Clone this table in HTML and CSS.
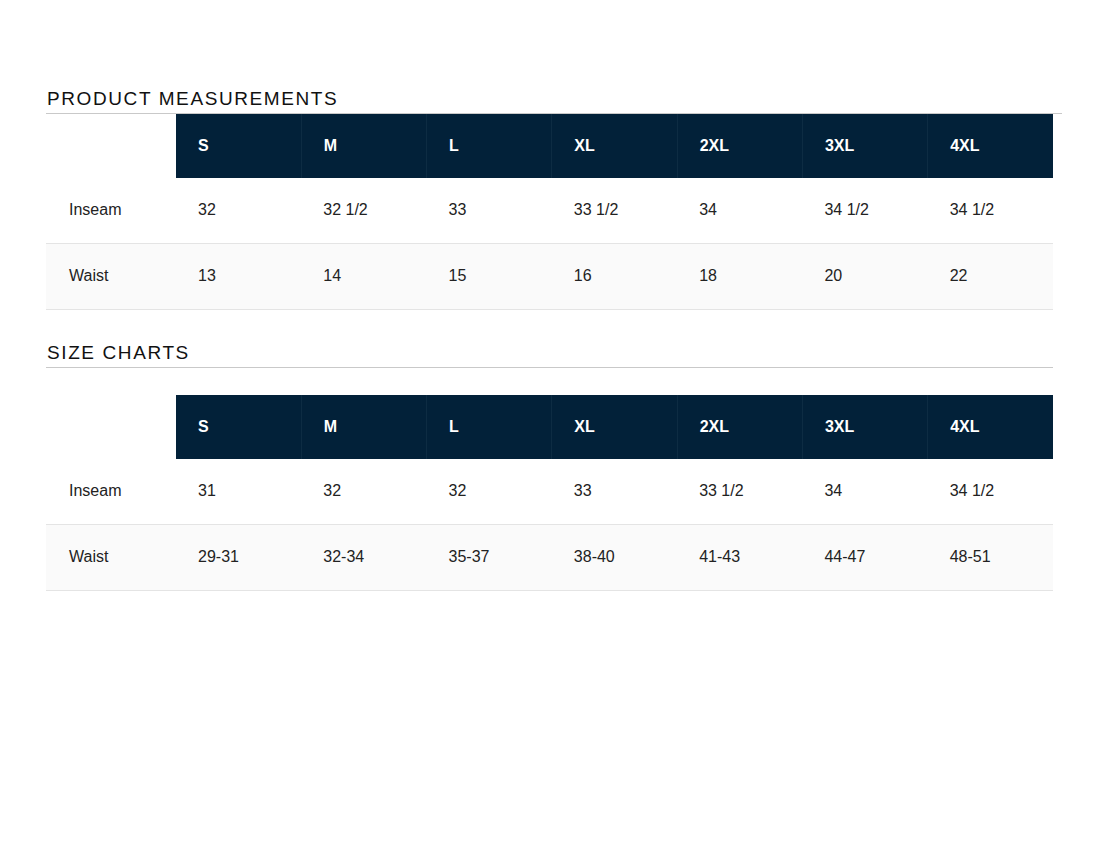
FILE: index.html
```html
<!DOCTYPE html>
<html lang="en">
<head>
    <meta charset="UTF-8">
    <meta name="viewport" content="width=device-width, initial-scale=1.0">
    <title>Size Guide</title>
    <link rel="stylesheet" href="styles.css">
</head>
<body>
    <div class="guide">
        <h2 class="section-title wide">Product Measurements</h2>
        <table class="size-table">
            <thead>
                <tr>
                    <th class="blank"></th>
                    <th>S</th><th>M</th><th>L</th><th>XL</th><th>2XL</th><th>3XL</th><th>4XL</th>
                </tr>
            </thead>
            <tbody>
                <tr>
                    <td>Inseam</td>
                    <td>32</td><td>32 1/2</td><td>33</td><td>33 1/2</td><td>34</td><td>34 1/2</td><td>34 1/2</td>
                </tr>
                <tr class="alt">
                    <td>Waist</td>
                    <td>13</td><td>14</td><td>15</td><td>16</td><td>18</td><td>20</td><td>22</td>
                </tr>
            </tbody>
        </table>

        <h2 class="section-title spaced">Size Charts</h2>
        <table class="size-table">
            <thead>
                <tr>
                    <th class="blank"></th>
                    <th>S</th><th>M</th><th>L</th><th>XL</th><th>2XL</th><th>3XL</th><th>4XL</th>
                </tr>
            </thead>
            <tbody>
                <tr>
                    <td>Inseam</td>
                    <td>31</td><td>32</td><td>32</td><td>33</td><td>33 1/2</td><td>34</td><td>34 1/2</td>
                </tr>
                <tr class="alt">
                    <td>Waist</td>
                    <td>29-31</td><td>32-34</td><td>35-37</td><td>38-40</td><td>41-43</td><td>44-47</td><td>48-51</td>
                </tr>
            </tbody>
        </table>
    </div>
</body>
</html>
```

FILE: styles.css
```css
body {
    margin: 0;
    padding: 0;
    background: #fff;
    font-family: "Liberation Sans", Arial, sans-serif;
    color: #222;
}
.guide {
    width: 1007px;
    padding: 86px 0 0 46px;
}
.section-title {
    margin: 0;
    padding: 2px 0 3px 1px;
    font-size: 19px;
    line-height: 22px;
    font-weight: normal;
    letter-spacing: 1.6px;
    text-transform: uppercase;
    color: #111;
    border-bottom: 1px solid #c9c9c9;
}
.section-title.wide {
    margin-right: -9px;
}
.section-title.spaced {
    margin-top: 30px;
    margin-bottom: 27px;
}
.size-table {
    width: 1007px;
    border-collapse: collapse;
    table-layout: fixed;
}
.size-table th,
.size-table td {
    text-align: left;
    font-size: 16px;
    line-height: 20px;
    padding: 22px 0 22px 22px;
}
.size-table th {
    background-color: #022139;
    color: #fff;
    font-weight: bold;
    border-left: 1px solid #0d2c43;
}
.size-table th:nth-child(2) {
    border-left: none;
}
.size-table th.blank {
    box-sizing: border-box;
    width: 130px;
    background: none;
    border: none;
}
.size-table td {
    padding-bottom: 23px;
    border-bottom: 1px solid #e4e4e4;
}
.size-table td:first-child {
    padding-left: 23px;
}
.size-table tr.alt td {
    background-color: #fafafa;
}
```
